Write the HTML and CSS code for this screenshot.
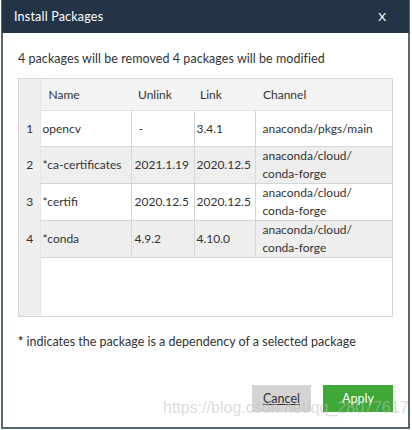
FILE: index.html
```html
<!DOCTYPE html>
<html>
<head>
<meta charset="utf-8">
<link rel="stylesheet" href="styles.css">
</head>
<body>
<div class="dialog">
  <div class="titlebar">
    <span class="title">Install Packages</span>
    <span class="close">X</span>
  </div>
  <div class="content">
    <p class="message">4 packages will be removed 4 packages will be modified</p>
    <div class="table-box">
      <table class="pkgs">
        <colgroup>
          <col class="c-idx"><col class="c-name"><col class="c-unlink"><col class="c-link"><col class="c-channel">
        </colgroup>
        <thead>
          <tr><th class="idx"></th><th class="h-name">Name</th><th class="h-unlink">Unlink</th><th class="h-link">Link</th><th class="h-channel">Channel</th></tr>
        </thead>
        <tbody>
          <tr class="r1"><td class="idx">1</td><td class="name">opencv</td><td class="unlink dash">-</td><td class="link">3.4.1</td><td class="channel">anaconda/pkgs/main</td></tr>
          <tr class="r2 alt"><td class="idx">2</td><td class="name">*ca-certificates</td><td class="unlink">2021.1.19</td><td class="link">2020.12.5</td><td class="channel">anaconda/cloud/<br>conda-forge</td></tr>
          <tr class="r3"><td class="idx">3</td><td class="name">*certifi</td><td class="unlink">2020.12.5</td><td class="link">2020.12.5</td><td class="channel">anaconda/cloud/<br>conda-forge</td></tr>
          <tr class="r4 alt"><td class="idx">4</td><td class="name">*conda</td><td class="unlink">4.9.2</td><td class="link">4.10.0</td><td class="channel">anaconda/cloud/<br>conda-forge</td></tr>
          <tr class="filler"><td class="idx"></td><td colspan="4"></td></tr>
        </tbody>
      </table>
    </div>
    <p class="note"><span class="star">*</span> indicates the package is a dependency of a selected package</p>
    <div class="buttons">
      <button class="btn cancel"><u>Cancel</u></button>
      <button class="btn apply">Apply</button>
    </div>
  </div>
  <div class="watermark">https://blog.csdn.net/qq_28077617</div>
</div>
</body>
</html>
```
FILE: styles.css
```css
html, body {
  margin: 0;
  padding: 0;
  background: #ffffff;
}
body {
  font-family: "Lato", "Noto Sans", sans-serif;
  color: #333333;
  font-size: 12px;
}
.dialog {
  position: relative;
  box-sizing: border-box;
  width: 409px;
  height: 429px;
  margin-left: 1px;
  border: 2px solid #56676d;
  border-top: none;
  display: flex;
  flex-direction: column;
}
.titlebar {
  height: 33px;
  background: #243447;
  color: #ffffff;
  display: flex;
  align-items: center;
  justify-content: space-between;
  padding: 0 23px 0 12px;
  margin: 0 -1px;
  font-size: 12.5px;
}
.title { letter-spacing: 0.2px; }
.close { font-size: 12px; }
.content {
  flex: 1;
  display: flex;
  flex-direction: column;
  padding: 0 15px 0 15px;
}
.message {
  margin: 18px 0 0 0;
  height: 16px;
  line-height: 16px;
  font-size: 12.5px;
  letter-spacing: 0.05px;
}
.table-box {
  margin-top: 11px;
  height: 239px;
  border: 1px solid #d6d6d6;
  box-sizing: border-box;
  display: flex;
}
.pkgs {
  border-collapse: collapse;
  table-layout: fixed;
  width: 100%;
  height: 100%;
  font-size: 12px;
}
.c-idx { width: 21px; }
.c-name { width: 91px; }
.c-unlink { width: 63px; }
.c-link { width: 61px; }
.c-channel { width: auto; }
.pkgs th {
  height: 31px;
  font-weight: normal;
  text-align: left;
  background: #f3f3f3;
  padding: 0 0 0 8px;
  border-bottom: 1px solid #e0e0e0;
}
.pkgs th.h-unlink { padding-left: 7px; }
.pkgs th.h-link { padding-left: 6px; }
.pkgs th.h-channel { padding-left: 8px; }
.pkgs td {
  padding: 0 0 0 5px;
  border: 1px solid #d6d6d6;
  border-top: none;
  white-space: nowrap;
  line-height: 18px;
}
.pkgs td.idx, .pkgs th.idx {
  background: #efefef;
  border: none;
  border-right: 1px solid #e6e6e6;
  text-align: center;
  padding: 0 0 0 1px;
}
.pkgs tr > td:last-child { border-right: none; }
.pkgs td.name { padding-left: 2px; }
.pkgs td.unlink { padding-left: 3px; }
.pkgs td.unlink.dash { padding-left: 7px; }
.pkgs td.link { padding-left: 2px; }
.pkgs td.channel { padding-left: 7px; }
.r1 td { height: 35px; }
.r2 td, .r3 td, .r4 td { height: 35px; }
.alt td { background: #eeeeee; }
.alt td.idx { background: #efefef; }
.filler td { height: auto; border: none; }
.filler td.idx { border-right: 1px solid #e6e6e6; }
.note {
  margin: 17px 0 0 0;
  height: 16px;
  line-height: 16px;
  font-size: 12.5px;
}
.star { font-weight: bold; }
.buttons {
  margin-top: 35px;
  display: flex;
  justify-content: flex-end;
  gap: 12px;
}
.btn {
  border: none;
  height: 27px;
  font-family: inherit;
  font-size: 12.5px;
  padding: 0;
}
.cancel {
  width: 59px;
  background: #d4d4d4;
  color: #333333;
}
.apply {
  width: 70px;
  background: #3fa836;
  color: #ffffff;
}
.watermark {
  position: absolute;
  left: 160px;
  top: 399px;
  font-family: "Liberation Sans", Arial, sans-serif;
  font-size: 16px;
  color: rgba(190, 190, 190, 0.55);
  pointer-events: none;
}
```
